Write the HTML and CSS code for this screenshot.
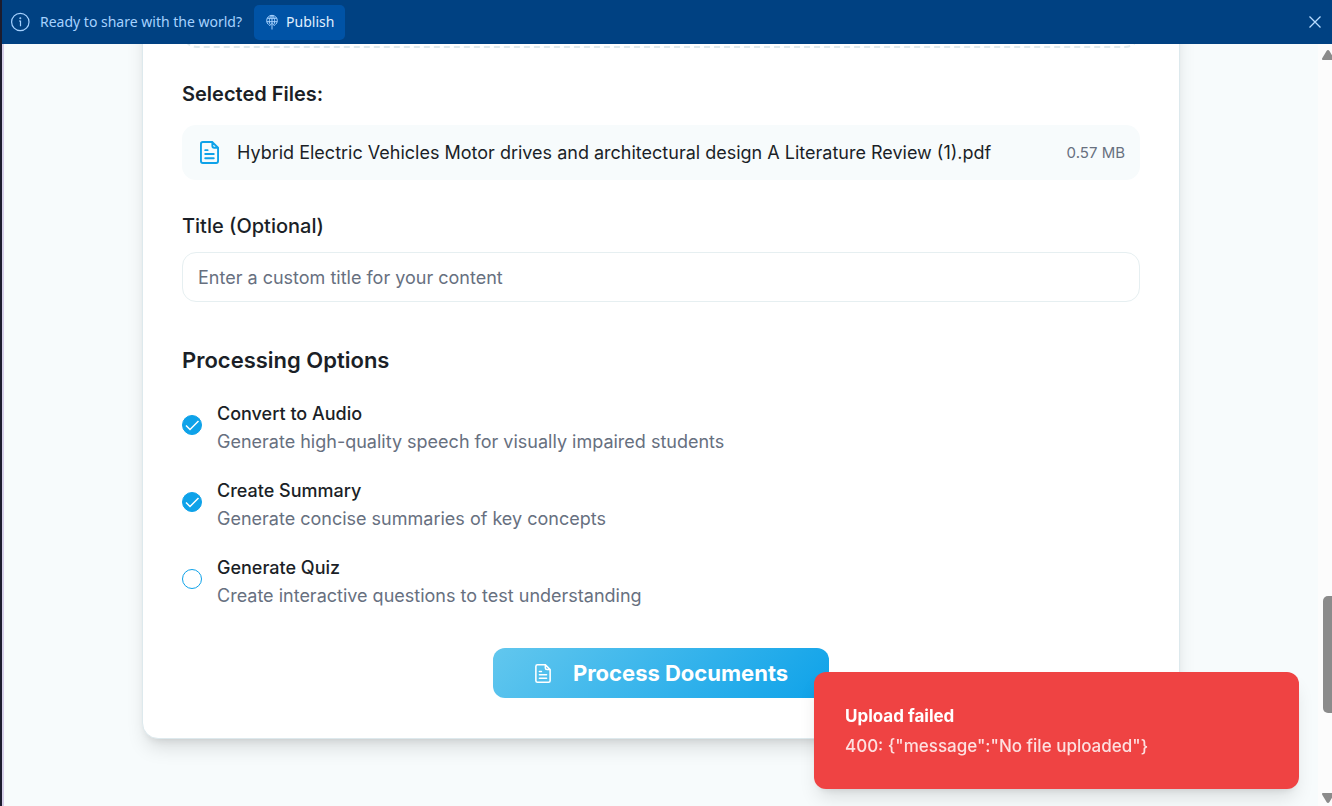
FILE: index.html
```html
<!DOCTYPE html>
<html lang="en">
<head>
<meta charset="utf-8">
<meta name="viewport" content="width=device-width, initial-scale=1">
<title>Process Documents</title>
<link rel="stylesheet" href="styles.css">
</head>
<body>
<header class="banner">
  <svg class="banner-info" viewBox="0 0 20 20" fill="none" stroke="currentColor" stroke-width="1.2" aria-hidden="true"><circle cx="10.300" cy="10" r="8.700"/><path d="M9 9h1.500v5.200"/><circle cx="10.300" cy="6.300" r=".4" fill="currentColor"/></svg>
  <span class="banner-text">Ready to share with the world?</span>
  <button class="publish" type="button">
    <svg class="publish-icon" viewBox="0 0 14 16" fill="none" stroke="currentColor" stroke-width="1" aria-hidden="true"><path d="M3.500 10.600A5.300 5.300 0 1 1 10.500 10.600M2.200 4.300h9.600M1.800 7.700h10.400M5 10.500C3.800 7.500 4.200 3.200 7 1.300C9.800 3.200 10.200 7.500 9 10.500M7 1.300V15.500M4.300 12L7 9.300L9.700 12"/></svg>
    Publish
  </button>
  <button class="close" type="button" aria-label="Close">
    <svg viewBox="0 0 12 12" fill="none" stroke="currentColor" stroke-width="1.3" aria-hidden="true"><path d="M.5.5l11 11M11.500.5l-11 11"/></svg>
  </button>
</header>

<div class="viewport">
  <main class="page">
    <form class="card">
      <div class="dropzone"></div>
      <h3 class="files-heading">Selected Files:</h3>
      <div class="file">
        <svg class="file-icon" viewBox="0 0 20 24" fill="none" stroke="currentColor" stroke-width="2" stroke-linecap="round" stroke-linejoin="round" aria-hidden="true"><path d="M13 1H3a2 2 0 0 0-2 2v18a2 2 0 0 0 2 2h14a2 2 0 0 0 2-2V7L13 1v4a2 2 0 0 0 2 2h4M5.500 9.500h2.500M5.500 13.500h9M5.500 18h9"/></svg>
        <span class="file-name">Hybrid Electric Vehicles Motor drives and architectural design A Literature Review (1).pdf</span>
        <span class="file-size">0.57 MB</span>
      </div>
      <label class="title-label" for="title">Title (Optional)</label>
      <input class="title-input" id="title" type="text" placeholder="Enter a custom title for your content">
      <h2 class="options-heading">Processing Options</h2>
      <div class="options">
        <label class="option"><input class="check" type="checkbox" checked>
          <span class="option-text"><span class="option-name">Convert to Audio</span><span class="option-desc">Generate high-quality speech for visually impaired students</span></span></label>
        <label class="option"><input class="check" type="checkbox" checked>
          <span class="option-text"><span class="option-name">Create Summary</span><span class="option-desc">Generate concise summaries of key concepts</span></span></label>
        <label class="option"><input class="check" type="checkbox">
          <span class="option-text"><span class="option-name">Generate Quiz</span><span class="option-desc">Create interactive questions to test understanding</span></span></label>
      </div>
      <button class="process" type="button">
        <svg class="process-icon" viewBox="0 0 20 24" fill="none" stroke="currentColor" stroke-width="2" stroke-linecap="round" stroke-linejoin="round" aria-hidden="true"><path d="M13 1H3a2 2 0 0 0-2 2v18a2 2 0 0 0 2 2h14a2 2 0 0 0 2-2V7L13 1v4a2 2 0 0 0 2 2h4M5.500 9.500h2.500M5.500 13.500h9M5.500 18h9"/></svg>
        Process Documents
      </button>
    </form>
  </main>
  <div class="scrollbar" aria-hidden="true">
    <svg class="arrow" viewBox="0 0 12 10"><path d="M6 0c.5 0 1 .3 1.300.8l4.500 7.500c.5.900 0 1.700-1 1.700H1.200c-1 0-1.500-.8-1-1.700L4.700.8C5 .3 5.500 0 6 0z"/></svg>
    <span class="thumb"></span>
    <svg class="arrow arrow-down" viewBox="0 0 12 10"><path d="M6 0c.5 0 1 .3 1.300.8l4.500 7.500c.5.900 0 1.700-1 1.700H1.200c-1 0-1.500-.8-1-1.700L4.700.8C5 .3 5.500 0 6 0z"/></svg>
  </div>
</div>

<div class="toast" role="alert">
  <strong class="toast-title">Upload failed</strong>
  <span class="toast-message">400: {"message":"No file uploaded"}</span>
</div>
</body>
</html>
```

FILE: styles.css
```css
* { box-sizing: border-box; }

body {
  margin: 0;
  height: 100vh;
  display: flex;
  flex-direction: column;
  overflow: hidden;
  font-family: Inter, "Liberation Sans", sans-serif;
  font-size: 18px;
  line-height: 28px;
  color: #1b1f27;
  background: #f7fbfc;
}

button { font: inherit; border: 0; cursor: pointer; }
h2, h3 { margin: 0; }

/* Top banner */
.banner {
  flex: none;
  height: 44px;
  display: flex;
  align-items: center;
  padding: 0 11px 0 8px;
  border-left: 2px solid #1c1c2e;
  background: #004182;
  color: #a6d2ff;
  font-family: "Noto Sans", sans-serif;
  font-size: 14px;
}
.banner-info { width: 20px; height: 20px; }
.banner-text { margin: 0 12px 0 10px; line-height: 20px; }
.publish {
  display: flex;
  align-items: center;
  gap: 7px;
  height: 35px;
  padding: 0 11px;
  border-radius: 5px;
  background: #0053a6;
  color: #e0f0ff;
}
.publish-icon { width: 14px; height: 16px; color: #a6d2ff; }
.close { margin-left: auto; padding: 0; display: flex; background: none; color: #b8dcff; }
.close svg { width: 12px; height: 12px; }

/* Scrolling page area */
.viewport {
  flex: 1;
  min-height: 0;
  display: flex;
  overflow: hidden;
  border-left: 2px solid #1c1c2e;
}
.page {
  flex: 1;
  min-width: 0;
  padding: 0 138px;
  border-left: 2px solid #d5cfe8;
}
.card {
  display: flex;
  flex-direction: column;
  margin-top: -80px;
  padding: 39px 39px 40px;
  border: 1px solid #dde9ed;
  border-radius: 16px;
  background: #fff;
  box-shadow: 0 12px 19px -4px rgba(0, 0, 0, .13), 0 5px 8px -5px rgba(0, 0, 0, .12);
}
.dropzone {
  height: 44px;
  border: 2px dashed #dde9ed;
  border-radius: 15px;
}
.files-heading {
  margin: 31px 0 16px;
  font-size: 20px;
  font-weight: 600;
  line-height: 30px;
}
.file {
  display: flex;
  align-items: center;
  height: 55px;
  padding: 0 15px 0 18px;
  border-radius: 14px;
  background: #f7fbfc;
}
.file-icon { width: 19px; height: 23px; margin-right: 18px; color: #0ea2e9; }
.file-name { flex: 1; }
.file-size { font-size: 15px; color: #67707f; }
.title-label {
  margin: 31px 0 11px;
  font-size: 20px;
  font-weight: 500;
  line-height: 30px;
}
.title-input {
  height: 50px;
  padding: 0 15px;
  border: 1px solid #e6eff1;
  border-radius: 14px;
  background: #fff;
  color: inherit;
  font: inherit;
}
.title-input::placeholder { color: #67707f; opacity: 1; }
.options-heading {
  margin: 40px 0 22px;
  font-size: 22px;
  font-weight: 600;
  line-height: 36px;
}
.options { display: flex; flex-direction: column; gap: 21px; }
.option { display: flex; align-items: flex-start; gap: 15px; }
.check {
  appearance: none;
  flex: none;
  width: 20px;
  height: 20px;
  margin: 15px 0 0;
  border: 1px solid #0ea2e9;
  border-radius: 50%;
}
.check:checked {
  background: #0ea2e9 url("data:image/svg+xml,%3Csvg xmlns='http://www.w3.org/2000/svg' viewBox='0 0 18 18' fill='none' stroke='white' stroke-width='1.5'%3E%3Cpath d='M3 9.500l4 4L15.500 5'/%3E%3C/svg%3E") center / 18px 18px no-repeat;
}
.option-text { display: flex; flex-direction: column; }
.option-name { font-weight: 500; }
.option-desc { color: #67707f; }
.process {
  align-self: center;
  display: flex;
  align-items: center;
  gap: 22px;
  height: 50px;
  margin-top: 38px;
  padding: 0 41px 0 42px;
  border-radius: 12px;
  background: linear-gradient(135deg, #62c7ee, #0ea2e9);
  color: #fff;
  font-size: 22px;
  font-weight: 700;
}
.process-icon { width: 16px; height: 19px; }

/* Scroll bar */
.scrollbar {
  flex: none;
  width: 14px;
  display: flex;
  flex-direction: column;
  padding: 6px 0 3px 4px;
  background: #fcfcfc;
}
.arrow { flex: none; width: 12px; height: 10px; fill: #8b8b8b; }
.arrow-down { margin-top: auto; transform: rotate(180deg); }
.thumb {
  height: 117px;
  margin: 536px 0 0 1px;
  border-radius: 5px 0 0 5px;
  background: #8b8b8b;
}

/* Notification over the page */
.toast {
  position: fixed;
  right: 33px;
  bottom: 17px;
  width: 485px;
  max-width: 90vw;
  display: flex;
  flex-direction: column;
  gap: 2px;
  padding: 30px 31px 29px;
  border-radius: 12px;
  background: #ef4343;
  color: #fff;
  font-size: 17px;
  box-shadow: 0 12px 19px -4px rgba(0, 0, 0, .12), 0 5px 8px -5px rgba(0, 0, 0, .12);
}
.toast-title { font-weight: 700; }
.toast-message { color: #fde0e0; font-weight: 500; }
```
